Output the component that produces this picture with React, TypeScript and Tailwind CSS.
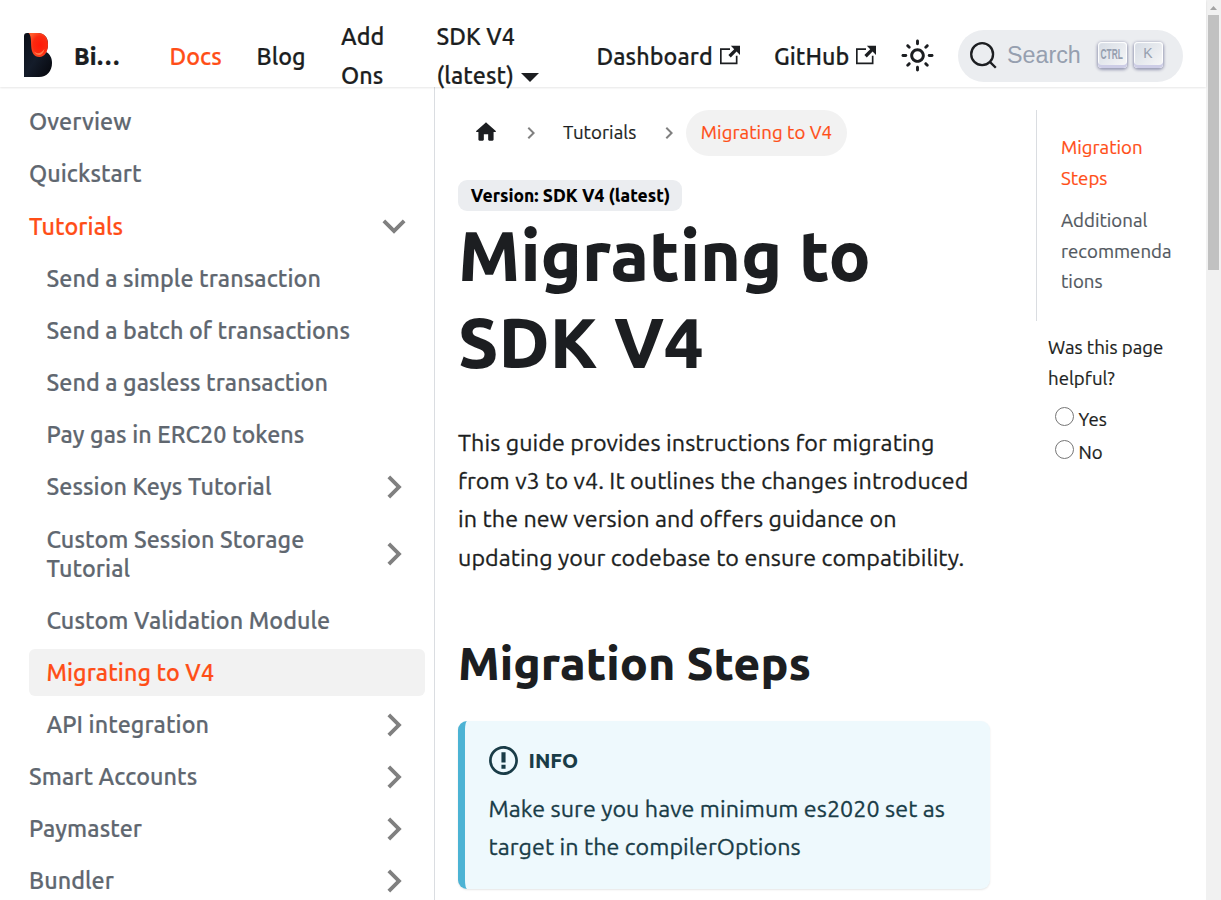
import type { ReactNode } from 'react';

type MenuItem = { label: string; child?: boolean; active?: boolean; caret?: 'right' | 'down'; selected?: boolean };

const menu: MenuItem[] = [
  { label: 'Overview' },
  { label: 'Quickstart' },
  { label: 'Tutorials', active: true, caret: 'down' },
  { label: 'Send a simple transaction', child: true },
  { label: 'Send a batch of transactions', child: true },
  { label: 'Send a gasless transaction', child: true },
  { label: 'Pay gas in ERC20 tokens', child: true },
  { label: 'Session Keys Tutorial', child: true, caret: 'right' },
  { label: 'Custom Session Storage Tutorial', child: true, caret: 'right' },
  { label: 'Custom Validation Module', child: true },
  { label: 'Migrating to V4', child: true, active: true, selected: true },
  { label: 'API integration', child: true, caret: 'right' },
  { label: 'Smart Accounts', caret: 'right' },
  { label: 'Paymaster', caret: 'right' },
  { label: 'Bundler', caret: 'right' },
];

function Chevron({ className }: { className: string }) {
  return (
    <svg viewBox="0 0 24 24" className={className} fill="currentColor">
      <path d="M8.59 16.59L13.17 12 8.59 7.41 10 6l6 6-6 6z" />
    </svg>
  );
}

function Logo() {
  return (
    <svg viewBox="0 0 28 44" className="mb-[2px] h-[44px] w-[28px] shrink-0">
      <defs>
        <linearGradient id="body" x1="0" y1="0" x2="1" y2="1">
          <stop offset="0" stopColor="#0b0f18" />
          <stop offset="0.5" stopColor="#141c2a" />
          <stop offset="1" stopColor="#05060b" />
        </linearGradient>
        <radialGradient id="drop" cx="0.6" cy="0.5" r="0.6">
          <stop offset="0" stopColor="#ff1a08" />
          <stop offset="0.6" stopColor="#fb2a10" />
          <stop offset="1" stopColor="#ff5a2c" />
        </radialGradient>
      </defs>
      <path d="M0 3Q0 0 3 0H13C20 0 24 4 24 11C24 15 23 17 22 19C26 21 28 25 28 30C28 38 23 44 15 44H0Z" fill="url(#body)" />
      <path d="M4.500 0H14C20.500 0 24 4.500 24 11.500C24 19 20.500 24 15.500 24C10 24 7.500 19.500 7.200 13C7 6 7 2 4.500 0Z" fill="url(#drop)" />
      <path d="M10 18.500Q15 23 20.500 16Q19 22 15 22Q12 22 10 18.500Z" fill="#ff7a4a" />
    </svg>
  );
}

function ExternalIcon() {
  return (
    <svg viewBox="0 0 24 24" className="mb-[3px] ml-[7px] h-[20px] w-[20px] shrink-0" fill="currentColor">
      <path d="M21 13v10h-21v-19h12v2h-10v15h17v-8h2zm3-12h-10.988l4.035 4-6.977 7.070 2.828 2.828 6.977-7.070 4.125 4.172v-11z" />
    </svg>
  );
}

function Sun() {
  return (
    <svg viewBox="0 0 24 24" className="mb-[2px] h-[35px] w-[35px] shrink-0" fill="currentColor">
      <path d="M12,9c1.65,0,3,1.35,3,3s-1.350,3-3,3s-3-1.350-3-3S10.350,9,12,9 M12,7c-2.760,0-5,2.240-5,5s2.240,5,5,5s5-2.240,5-5 S14.760,7,12,7L12,7z M2,13l2,0c0.550,0,1-0.450,1-1s-0.450-1-1-1l-2,0c-0.550,0-1,0.450-1,1S1.450,13,2,13z M20,13l2,0c0.550,0,1-0.450,1-1 s-0.450-1-1-1l-2,0c-0.550,0-1,0.450-1,1S19.450,13,20,13z M11,2v2c0,0.550,0.450,1,1,1s1-0.450,1-1V2c0-0.550-0.450-1-1-1S11,1.450,11,2z M11,20v2c0,0.550,0.450,1,1,1s1-0.450,1-1v-2c0-0.550-0.450-1-1-1C11.450,19,11,19.450,11,20z M5.990,4.580c-0.390-0.390-1.030-0.390-1.410,0 c-0.390,0.390-0.390,1.030,0,1.410l1.060,1.060c0.390,0.390,1.030,0.390,1.410,0s0.390-1.030,0-1.410L5.990,4.580z M18.360,16.950 c-0.390-0.390-1.030-0.390-1.410,0c-0.390,0.390-0.390,1.030,0,1.410l1.060,1.060c0.390,0.390,1.030,0.390,1.410,0c0.390-0.390,0.390-1.030,0-1.410 L18.360,16.950z M19.420,5.990c0.390-0.390,0.390-1.030,0-1.410c-0.390-0.390-1.030-0.390-1.410,0l-1.060,1.060c-0.390,0.390-0.390,1.030,0,1.410 s1.030,0.390,1.410,0L19.420,5.990z M7.050,18.360c0.390-0.390,0.390-1.030,0-1.410c-0.390-0.390-1.030-0.390-1.410,0l-1.060,1.060 c-0.390,0.390-0.390,1.030,0,1.410s1.030,0.390,1.410,0L7.050,18.360z" />
    </svg>
  );
}

function Key({ children }: { children: ReactNode }) {
  return (
    <span className="flex h-[26px] w-[29px] items-center justify-center rounded-[4px] bg-linear-[-225deg,#d5dbe4,#f8f8f8] text-[#969faf] shadow-[inset_0_-3px_0_0_#cdcde6,inset_0_0_1px_1px_#fff,0_1px_3px_1px_rgba(30,35,90,0.4)]">
      {children}
    </span>
  );
}

function Header() {
  return (
    <header className="relative z-10 h-[87px] shrink-0 bg-white shadow-[0_1px_2px_0_rgba(0,0,0,0.1)]">
      <div className="flex h-[112px] w-[1206px] items-center pl-[24px] font-medium leading-[39px] [-webkit-text-stroke:0.200px]">
        <Logo />
        <b className="ml-[22px] w-[95px] font-extrabold">Bi…</b>
        <a className="ml-[0.500px] w-[52px] text-[#ff4e17]">Docs</a>
        <a className="ml-[35px] w-[49px]">Blog</a>
        <a className="ml-[35.500px] w-[60px]">Add Ons</a>
        <a className="ml-[35.500px] w-[126px]">
          SDK V4 <span className="whitespace-nowrap">(latest)
            <svg viewBox="0 0 18 9" className="ml-[7px] inline-block h-[9px] w-[18px]"><path d="M0 0H18L9 9Z" fill="currentColor" /></svg>
          </span>
        </a>
        <a className="ml-[34px] flex w-[142px] items-center tracking-[0.075px]">Dashboard<ExternalIcon /></a>
        <a className="ml-[35.500px] flex w-[103px] items-center tracking-[0.030px]">GitHub<ExternalIcon /></a>
        <span className="ml-[22.500px] flex"><Sun /></span>
        <div className="ml-[23px] flex h-[52px] w-[225px] items-center rounded-full bg-[#ebedf0] pl-[11.500px] [-webkit-text-stroke:0]">
          <svg viewBox="0 0 20 20" className="mb-[1px] h-[29px] w-[29px]" fill="none" stroke="currentColor" strokeWidth="1.6" strokeLinecap="round">
            <path d="M14.386 14.386l4.088 4.088-4.088-4.088c-2.942 2.942-7.711 2.942-10.653 0s-2.942-7.711 0-10.653 7.711-2.942 10.653 0 2.942 7.711 0 10.653z" />
          </svg>
          <span className="ml-[9px] w-[90.500px] font-['Liberation_Sans',sans-serif] text-[23.300px] font-normal leading-none tracking-normal text-[#969faf]">Search</span>
          <div className="mb-[3px] flex gap-[7px] font-['Liberation_Sans',sans-serif] tracking-normal">
            <Key><span className="mb-[2px] block scale-x-[0.54] text-[15.500px] font-bold leading-none">CTRL</span></Key>
            <Key><span className="mb-[4px] text-[14px] font-normal leading-none">K</span></Key>
          </div>
        </div>
      </div>
    </header>
  );
}

function Sidebar() {
  return (
    <nav className="w-[435px] shrink-0 overflow-hidden border-r border-[#dadde1] pr-[9px] pt-[11.400px] text-[#606770] [-webkit-text-stroke:0.200px]">
      {menu.map((m) => (
        <div
          key={m.label}
          className={`mb-[5.380px] flex items-center rounded-[6px] py-[8.900px] font-medium leading-[29px] ${m.child ? 'ml-[29px] pl-[17.500px]' : 'ml-[11.500px] pl-[17.500px]'} ${m.active ? 'text-[#ff4e17]' : ''} ${m.selected ? 'bg-[#f2f2f2]' : ''}`}
        >
          <span className="flex-1 pr-[20px]">{m.label}</span>
          {m.caret && (
            <span className="flex w-[63px] items-center justify-center text-[#808080]">
              <Chevron className={`-my-3 h-[46px] w-[46px] shrink-0 ${m.caret === 'down' ? 'rotate-90' : ''}`} />
            </span>
          )}
        </div>
      ))}
    </nav>
  );
}

function Article() {
  return (
    <main className="w-[555px] shrink-0 pl-[23px] pt-[23px]">
      <div className="flex h-[46px] items-center text-[18.640px] [-webkit-text-stroke:0.200px]">
        <svg viewBox="0 0 24 24" className="mb-[3px] ml-[15px] h-[26px] w-[26px]" fill="currentColor"><path d="M10 19v-5h4v5c0 .55.45 1 1 1h3c.55 0 1-.45 1-1v-7h1.700c.46 0 .68-.57.33-.87L12.670 3.600c-.38-.34-.96-.34-1.340 0l-8.360 7.530c-.34.3-.13.870.33.870H5v7c0 .55.45 1 1 1h3c.55 0 1-.45 1-1z" /></svg>
        <Chevron className="ml-[20px] h-[24px] w-[24px] text-[#808080]" />
        <span className="ml-[20px] w-[75px]">Tutorials</span>
        <Chevron className="ml-[19px] h-[24px] w-[24px] text-[#808080]" />
        <span className="ml-[5px] flex h-[46px] w-[161px] items-center justify-center rounded-full bg-[#f2f2f2] text-[#ff4e17]">Migrating to V4</span>
      </div>
      <span className="mt-[24px] flex h-[31px] w-[224px] items-center justify-center rounded-[9px] bg-[#ebedf0] pl-px pt-px text-[17.450px] font-extrabold tracking-normal text-black">Version: SDK V4 (latest)</span>
      <h1 className="mt-[1px] text-[69.600px] font-extrabold leading-[86.500px] tracking-normal">Migrating to SDK V4</h1>
      <p className="mt-[37.700px] w-[520px] leading-[38.330px] tracking-[0.075px] [-webkit-text-stroke:0.300px]">This guide provides instructions for migrating from v3 to v4. It outlines the changes introduced in the new version and offers guidance on updating your codebase to ensure compatibility.</p>
      <h2 className="mt-[58.300px] text-[46.500px] font-extrabold leading-[58px] tracking-normal">Migration Steps</h2>
      <section className="mt-[29px] h-[168px] w-[532px] rounded-[9px] border-l-[7px] border-[#4cb3d4] bg-[#eef9fd] pl-[24px] pt-[20px] text-[#193c47] shadow-[0_1px_2px_0_rgba(0,0,0,0.1)]">
        <div className="flex h-[38px] items-center text-[20.400px] font-extrabold tracking-normal">
          <svg viewBox="0 0 14 16" className="h-[33px] w-[29px]" fill="currentColor"><path fillRule="evenodd" d="M7 2.300c3.140 0 5.700 2.560 5.700 5.700s-2.560 5.700-5.700 5.700A5.710 5.710 0 0 1 1.300 8c0-3.140 2.560-5.700 5.700-5.700zM7 1C3.140 1 0 4.140 0 8s3.140 7 7 7 7-3.140 7-7-3.140-7-7-7zm1 3H6v5h2V4zm0 6H6v2h2v-2z" /></svg>
          <span className="ml-[10.500px] mt-[2px]">INFO</span>
        </div>
        <p className="-ml-[0.500px] mt-[9.700px] w-[480px] leading-[38.330px] tracking-[0.050px] [-webkit-text-stroke:0.300px]">Make sure you have minimum es2020 set as target in the compilerOptions</p>
      </section>
    </main>
  );
}

function Option({ label }: { label: string }) {
  return (
    <label className="flex h-[33px] items-center gap-[4.500px]">
      <span className="mb-[6px] h-[19px] w-[19px] rounded-full border border-[#767676] bg-white" />
      {label}
    </label>
  );
}

function Aside() {
  return (
    <aside className="ml-[46px] w-[170px] pt-[23px] text-[18.640px] leading-[30.700px] tracking-[0.020px] [-webkit-text-stroke:0.200px]">
      <ul className="h-[211px] w-[150px] border-l border-[#dadde1] pl-[24px] pt-[22.800px]">
        <li className="text-[#ff4e17]">Migration<br />Steps</li>
        <li className="mt-[11.600px] w-[112px] text-[#525860] [overflow-wrap:break-word]">Additional recommendations</li>
      </ul>
      <p className="pl-[12px] pt-[12px]">Was this page<br />helpful?</p>
      <div className="ml-[19px] mt-[9px]">
        <Option label="Yes" />
        <Option label="No" />
      </div>
    </aside>
  );
}

export default function App() {
  return (
    <div className="flex h-[900px] w-[1221px] overflow-hidden bg-white font-['Ubuntu','Noto_Sans',sans-serif] text-[23.300px] tracking-[0.075px] text-[#1c1e21]">
      <div className="flex w-[1206px] shrink-0 flex-col">
        <Header />
        <div className="flex min-h-0 flex-1 overflow-hidden">
          <Sidebar />
          <Article />
          <Aside />
        </div>
      </div>
      <div className="flex w-[15px] flex-col items-center bg-[#f1f1f1]">
        <svg viewBox="0 0 15 15" className="h-[15px] w-[15px]"><path d="M4 10L7.500 6L11 10Z" fill="#a3a3a3" /></svg>
        <div className="h-[255px] w-[11px] bg-[#c1c1c1]" />
      </div>
    </div>
  );
}
